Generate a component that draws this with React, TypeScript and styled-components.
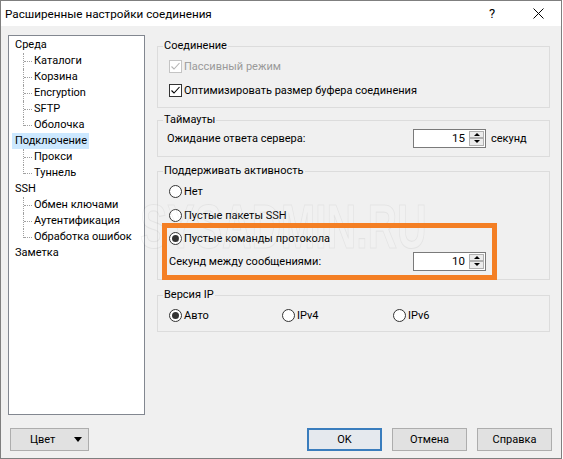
import React from 'react';
import styled, { createGlobalStyle, css } from 'styled-components';

const GlobalStyle = createGlobalStyle`
  html, body {
    margin: 0;
    padding: 0;
    background: #ffffff;
  }
  body {
    font-family: Roboto, 'Segoe UI', sans-serif;
    font-size: 11px;
    color: #000;
  }
  * {
    box-sizing: border-box;
  }
`;

const Window = styled.div`
  position: relative;
  width: 562px;
  height: 459px;
  display: flex;
  flex-direction: column;
  background: #f0f0f0;
  border: 1px solid #7f7f7f;
  overflow: hidden;
`;

const TitleBar = styled.div`
  height: 25px;
  flex-shrink: 0;
  background: #ffffff;
  display: flex;
  align-items: center;
`;

const Title = styled.div`
  flex: 1;
  padding-left: 4px;
  font-size: 11.7px;
`;

const CaptionButton = styled.div`
  width: 46px;
  height: 25px;
  display: flex;
  align-items: center;
  justify-content: center;
  font-size: 13px;
`;

const Body = styled.div`
  flex: 1;
  display: flex;
  flex-direction: column;
  padding: 9px 9px 7px 7px;
`;

const Main = styled.div`
  flex: 1;
  display: flex;
  gap: 12px;
  margin-right: 2px;
  min-height: 0;
`;

const Tree = styled.div`
  width: 137px;
  background: #ffffff;
  border: 1px solid #828790;
  padding: 1px 0 0 3px;
`;

const TreeRow = styled.div<{ $child?: boolean; $last?: boolean }>`
  position: relative;
  height: 16px;
  display: flex;
  align-items: center;
  padding-left: ${p => (p.$child ? 19 : 0)}px;
  ${p =>
    p.$child &&
    css`
      &::before {
        content: '';
        position: absolute;
        left: 11px;
        top: 0;
        height: ${p.$last ? 9 : 16}px;
        border-left: 1px dotted #a0a0a0;
      }
      &::after {
        content: '';
        position: absolute;
        left: 12px;
        top: 8px;
        width: 8px;
        border-top: 1px dotted #a0a0a0;
      }
    `}
`;

const TreeLabel = styled.span<{ $selected?: boolean }>`
  padding: 0 2px 0 3px;
  line-height: 16px;
  white-space: nowrap;
  background: ${p => (p.$selected ? '#cce8ff' : 'transparent')};
`;

const Panel = styled.div`
  flex: 1;
  display: flex;
  flex-direction: column;
  padding-top: 3px;
`;

const Group = styled.fieldset<{ $mt?: number; $pb: number }>`
  margin: ${p => p.$mt ?? 0}px 0 0 0;
  padding: 0 0 ${p => p.$pb}px 0;
  border: 1px solid #dcdcdc;
  min-width: 0;
`;

const Legend = styled.legend`
  margin-left: 5px;
  padding: 0 1px;
  line-height: 16px;
`;

const Row = styled.div<{ $h: number; $pl: number }>`
  height: ${p => p.$h}px;
  display: flex;
  align-items: center;
  padding-left: ${p => p.$pl}px;
`;

const Option = styled.label<{ $disabled?: boolean; $width?: number }>`
  display: flex;
  align-items: center;
  gap: 2px;
  width: ${p => (p.$width ? `${p.$width}px` : 'auto')};
  color: ${p => (p.$disabled ? '#9a9a9a' : '#000')};
`;

const CheckBox = styled.span<{ $disabled?: boolean }>`
  width: 13px;
  height: 13px;
  border: 1px solid ${p => (p.$disabled ? '#c4c4c4' : '#333333')};
  background: #ffffff;
  display: flex;
  align-items: center;
  justify-content: center;
`;

const Radio = styled.span<{ $checked?: boolean }>`
  position: relative;
  width: 13px;
  height: 13px;
  border-radius: 50%;
  border: 1px solid #333333;
  background: #ffffff;
  ${p =>
    p.$checked &&
    css`
      &::after {
        content: '';
        position: absolute;
        left: 2px;
        top: 2px;
        width: 7px;
        height: 7px;
        border-radius: 50%;
        background: #333333;
      }
    `}
`;

const FieldLabel = styled.span<{ $width: number }>`
  width: ${p => p.$width}px;
  flex-shrink: 0;
`;

const Spin = styled.div`
  width: 73px;
  height: 19px;
  display: flex;
  border: 1px solid #7a7a7a;
  background: #ffffff;
  padding: 1px;
`;

const SpinValue = styled.div`
  flex: 1;
  text-align: right;
  padding-right: 4px;
  line-height: 15px;
  font-size: 11.5px;
`;

const SpinButtons = styled.div`
  width: 15px;
  display: flex;
  flex-direction: column;
`;

const SpinButton = styled.div<{ $down?: boolean }>`
  flex: 1;
  border: 1px solid #b0b0b0;
  background: #ececec;
  display: flex;
  align-items: center;
  justify-content: center;
  &::after {
    content: '';
    border-left: 3px solid transparent;
    border-right: 3px solid transparent;
    ${p =>
      p.$down
        ? css`border-top: 3px solid #000;`
        : css`border-bottom: 3px solid #000;`}
  }
`;

const Unit = styled.span`
  margin-left: 5px;
`;

const Footer = styled.div`
  height: 23px;
  margin-top: 13px;
  display: flex;
  gap: 10px;
`;

const Button = styled.button<{ $default?: boolean }>`
  width: 75px;
  height: 23px;
  font: inherit;
  color: #000;
  background: #e1e1e1;
  border: 1px solid #adadad;
  padding: 0;
  ${p =>
    p.$default &&
    css`
      border: 2px solid #3a7dbd;
      background: #e5e9ee;
    `}
`;

const DropButton = styled(Button)`
  width: 79px;
  margin-left: 2px;
  margin-right: auto;
  display: flex;
  align-items: center;
  padding: 0 6px 0 19px;
  justify-content: space-between;
  &::after {
    content: '';
    border-left: 4px solid transparent;
    border-right: 4px solid transparent;
    border-top: 5px solid #000;
  }
`;

const Highlight = styled.div`
  position: absolute;
  left: 161px;
  top: 222px;
  width: 335px;
  height: 57px;
  border: 5px solid #f47f24;
  pointer-events: none;
`;

const Watermark = styled.div`
  position: absolute;
  left: 139px;
  top: 194px;
  font-family: 'Liberation Sans', Arial, sans-serif;
  font-weight: 700;
  font-size: 63px;
  line-height: 63px;
  color: rgba(255, 255, 255, 0.1);
  -webkit-text-stroke: 1.2px rgba(0, 0, 0, 0.05);
  transform: scaleX(0.65);
  transform-origin: left center;
  pointer-events: none;
  white-space: nowrap;
`;

const Check = ({ color }: { color: string }) => (
  <svg width="11" height="11" viewBox="0 0 11 11">
    <path d="M1.5 5.5 L4 8 L9.5 2" fill="none" stroke={color} strokeWidth="1.1" />
  </svg>
);

const tree = [
  { label: 'Среда', children: ['Каталоги', 'Корзина', 'Encryption', 'SFTP', 'Оболочка'] },
  { label: 'Подключение', selected: true, children: ['Прокси', 'Туннель'] },
  { label: 'SSH', children: ['Обмен ключами', 'Аутентификация', 'Обработка ошибок'] },
  { label: 'Заметка', children: [] as string[] },
];

const SpinBox = ({ value }: { value: number }) => (
  <Spin>
    <SpinValue>{value}</SpinValue>
    <SpinButtons>
      <SpinButton />
      <SpinButton $down />
    </SpinButtons>
  </Spin>
);

export default function App() {
  return (
    <>
      <GlobalStyle />
      <Window>
        <TitleBar>
          <Title>Расширенные настройки соединения</Title>
          <CaptionButton>?</CaptionButton>
          <CaptionButton>
            <svg width="11" height="11" viewBox="0 0 11 11">
              <path d="M0.5 0.5 L10.5 10.5 M10.5 0.5 L0.5 10.5" stroke="#000" strokeWidth="1" />
            </svg>
          </CaptionButton>
        </TitleBar>
        <Body>
          <Main>
            <Tree>
              {tree.map(node => (
                <React.Fragment key={node.label}>
                  <TreeRow>
                    <TreeLabel $selected={node.selected}>{node.label}</TreeLabel>
                  </TreeRow>
                  {node.children.map((child, i) => (
                    <TreeRow key={child} $child $last={i === node.children.length - 1}>
                      <TreeLabel>{child}</TreeLabel>
                    </TreeRow>
                  ))}
                </React.Fragment>
              ))}
            </Tree>
            <Panel>
              <Group $pb={5}>
                <Legend>Соединение</Legend>
                <Row $h={24} $pl={11}>
                  <Option $disabled>
                    <CheckBox $disabled>
                      <Check color="#b4b4b4" />
                    </CheckBox>
                    Пассивный режим
                  </Option>
                </Row>
                <Row $h={24} $pl={11}>
                  <Option>
                    <CheckBox>
                      <Check color="#000" />
                    </CheckBox>
                    Оптимизировать размер буфера соединения
                  </Option>
                </Row>
              </Group>
              <Group $mt={4} $pb={8}>
                <Legend>Таймауты</Legend>
                <Row $h={20} $pl={9}>
                  <FieldLabel $width={246}>Ожидание ответа сервера:</FieldLabel>
                  <SpinBox value={15} />
                  <Unit>секунд</Unit>
                </Row>
              </Group>
              <Group $mt={6} $pb={7}>
                <Legend>Поддерживать активность</Legend>
                <Row $h={24} $pl={11}>
                  <Option>
                    <Radio />
                    Нет
                  </Option>
                </Row>
                <Row $h={24} $pl={11}>
                  <Option>
                    <Radio />
                    Пустые пакеты SSH
                  </Option>
                </Row>
                <Row $h={23} $pl={11}>
                  <Option>
                    <Radio $checked />
                    Пустые команды протокола
                  </Option>
                </Row>
                <Row $h={22} $pl={11}>
                  <FieldLabel $width={244}>Секунд между сообщениями:</FieldLabel>
                  <SpinBox value={10} />
                </Row>
              </Group>
              <Group $mt={7} $pb={4}>
                <Legend>Версия IP</Legend>
                <Row $h={24} $pl={11}>
                  <Option $width={113}>
                    <Radio $checked />
                    Авто
                  </Option>
                  <Option $width={111}>
                    <Radio />
                    IPv4
                  </Option>
                  <Option>
                    <Radio />
                    IPv6
                  </Option>
                </Row>
              </Group>
            </Panel>
          </Main>
          <Footer>
            <DropButton>Цвет</DropButton>
            <Button $default>OK</Button>
            <Button>Отмена</Button>
            <Button>Справка</Button>
          </Footer>
        </Body>
        <Watermark>SYSADMIN.RU</Watermark>
        <Highlight />
      </Window>
    </>
  );
}
